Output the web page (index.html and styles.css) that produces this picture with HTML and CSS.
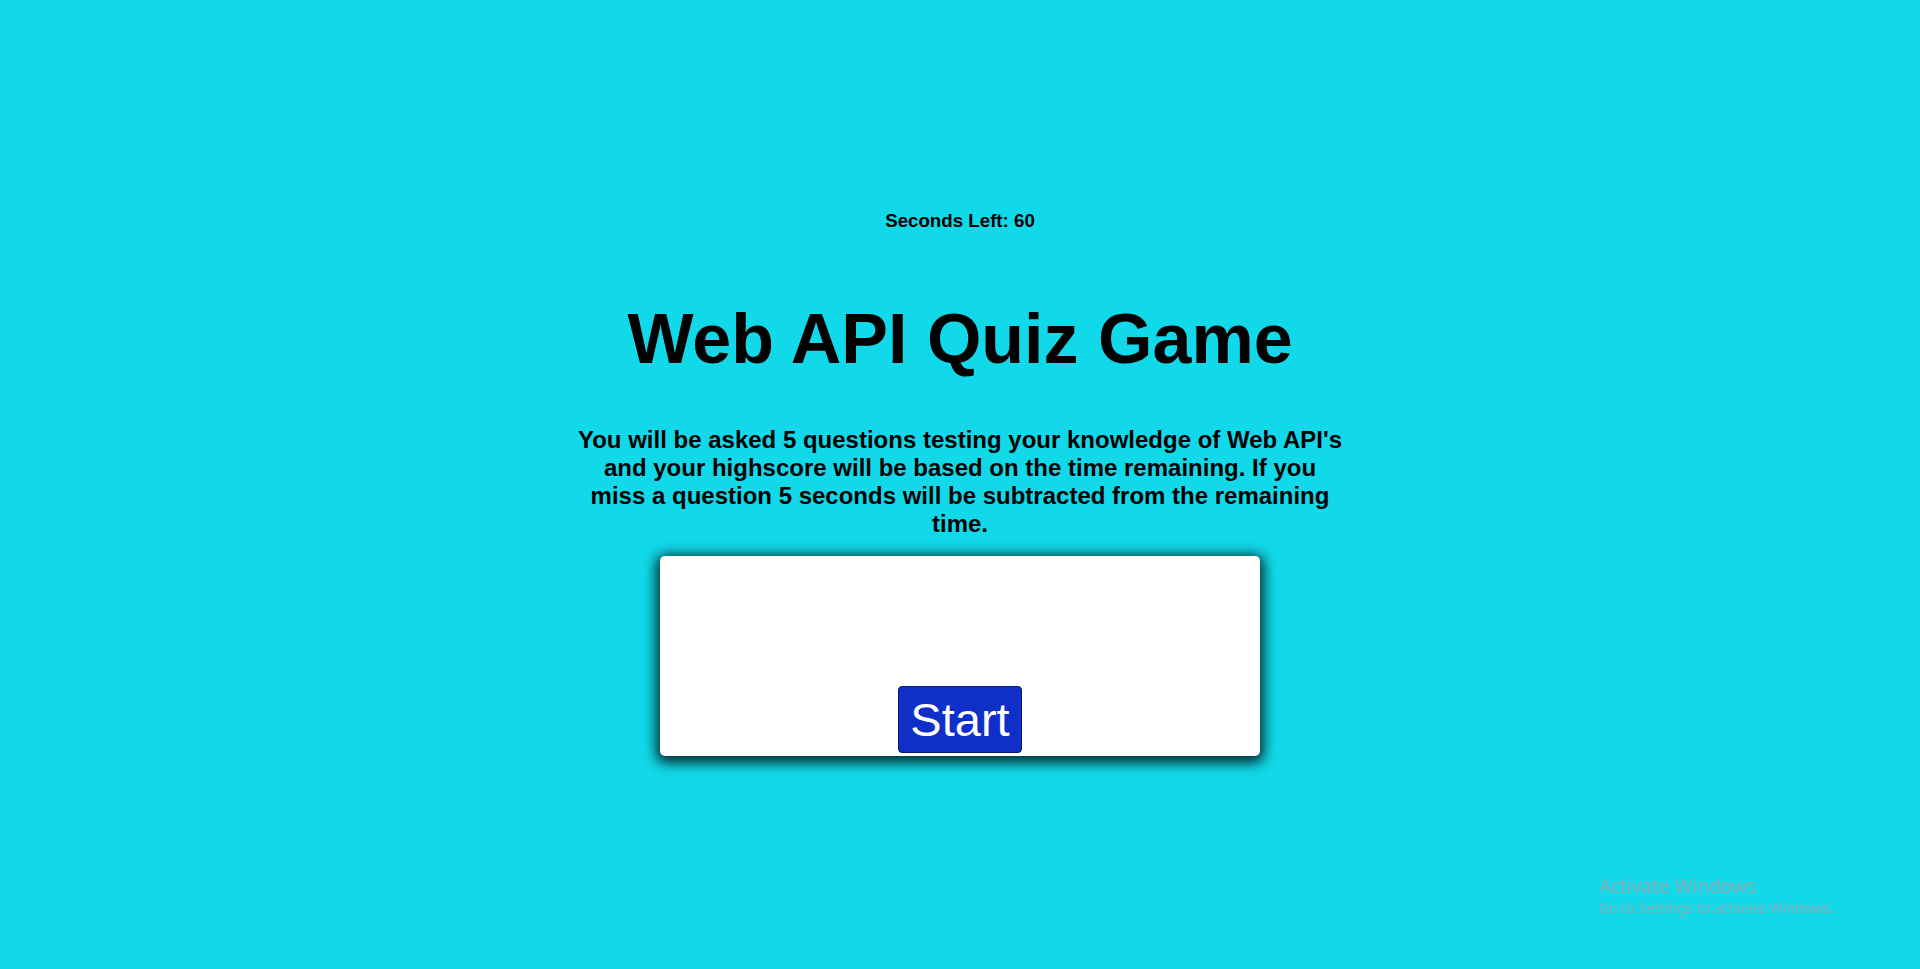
FILE: index.html
```html
<!DOCTYPE html>
<html lang="en">
<head>
<meta charset="utf-8">
<title>Web API Quiz Game</title>
<link rel="stylesheet" href="styles.css">
</head>
<body>
  <main class="page">
    <h3 class="timer">Seconds Left: <span class="timer-value">60</span></h3>
    <h1 class="title">Web API Quiz Game</h1>
    <h2 class="intro">You will be asked 5 questions testing your knowledge of Web API's and your highscore will be based on the time remaining. If you miss a question 5 seconds will be subtracted from the remaining time.</h2>
    <section class="quiz-box">
      <button class="start-btn" type="button">Start</button>
    </section>
  </main>
  <div class="activate">
    <div class="activate-title">Activate Windows</div>
    <div class="activate-sub">Go to Settings to activate Windows.</div>
  </div>
</body>
</html>
```

FILE: styles.css
```css
html, body {
  margin: 0;
  padding: 0;
}

body {
  background: #11d9e9;
  color: #000;
  font-family: "Liberation Sans", Arial, sans-serif;
  min-height: 969px;
  overflow: hidden;
}

.page {
  display: flex;
  flex-direction: column;
  align-items: center;
  padding-top: 210px;
  text-align: center;
}

.timer {
  margin: 0;
  font-size: 18.72px;
  font-weight: bold;
  line-height: normal;
}

.title {
  margin: 67px 0 0;
  font-size: 70px;
  font-weight: bold;
  line-height: normal;
}

.intro {
  margin: 47px 0 0;
  width: 770px;
  font-size: 24px;
  font-weight: bold;
  line-height: normal;
}

.quiz-box {
  margin-top: 18px;
  width: 600px;
  height: 200px;
  box-sizing: border-box;
  background: #fff;
  border-radius: 5px;
  box-shadow: 0 3px 13px 4px rgba(0, 0, 0, 0.8);
  display: flex;
  flex-direction: column;
  justify-content: flex-end;
  align-items: center;
  padding-bottom: 3px;
}

.start-btn {
  font-family: "Liberation Sans", Arial, sans-serif;
  font-size: 47px;
  line-height: normal;
  color: #fff;
  background: #0f2fc9;
  border: 1px solid #0b1a6a;
  border-radius: 4px;
  padding: 5px 11px;
  margin: 0;
  cursor: pointer;
}

.activate {
  position: fixed;
  left: 1599px;
  top: 874px;
  color: #8ea8b1;
  font-family: "Noto Sans", "Open Sans", sans-serif;
  text-align: left;
  pointer-events: none;
}

.activate-title {
  font-size: 19px;
  line-height: 24px;
}

.activate-sub {
  font-size: 14.2px;
  line-height: 20px;
}
```
